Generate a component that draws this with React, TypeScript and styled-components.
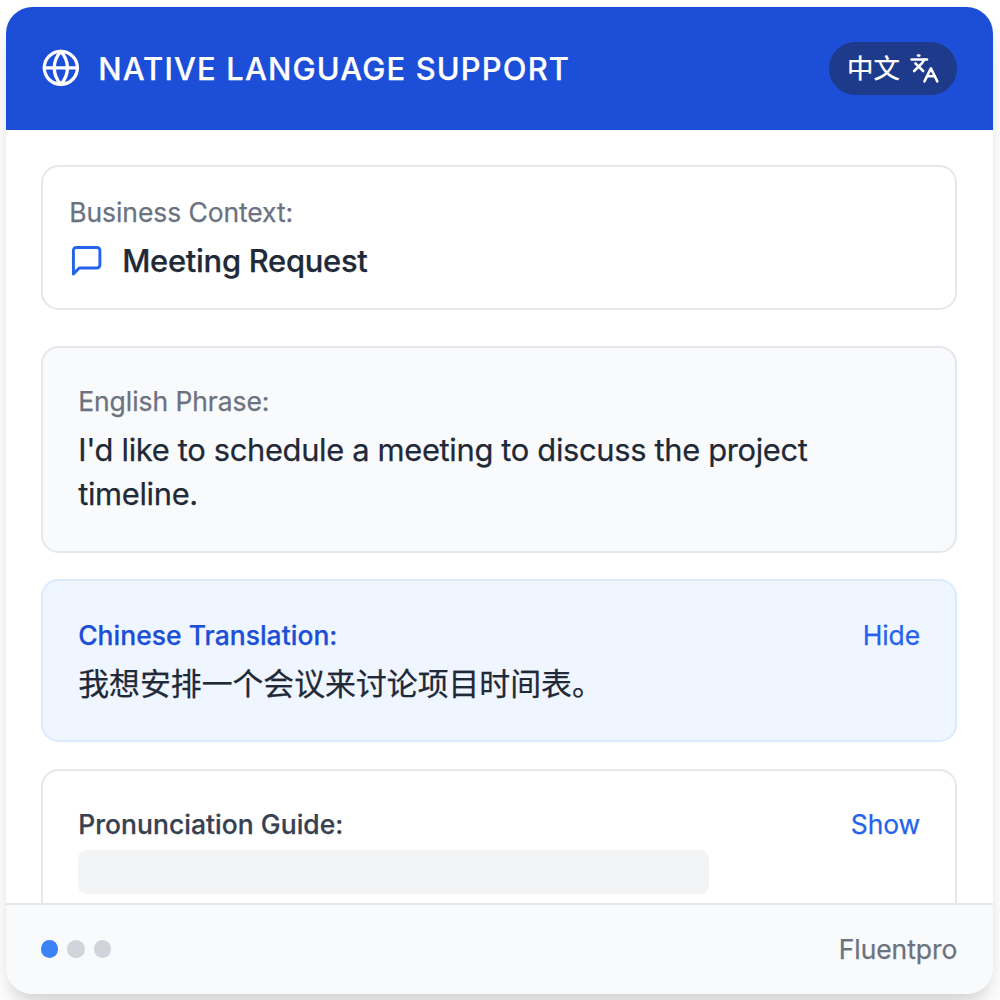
import React from "react";
import styled, { createGlobalStyle } from "styled-components";

const GlobalStyle = createGlobalStyle`
  *, *::before, *::after { box-sizing: border-box; }
  html, body { margin: 0; background: #fff; }
  body {
    width: 1000px;
    height: 1000px;
    overflow: hidden;
    font-family: Inter, "Noto Sans CJK SC", sans-serif;
    color: #1f2937;
    -webkit-font-smoothing: antialiased;
  }
`;

const Page = styled.div`
  height: 1000px;
  padding: 6.5px 7.5px 6.5px 5.6px;
  overflow: hidden;
`;

const Card = styled.div`
  display: flex;
  flex-direction: column;
  height: 987px;
  border-radius: 26.5px;
  overflow: hidden;
  background: #fff;
  box-shadow: 0 22px 33px -6.6px rgba(0, 0, 0, 0.1), 0 8.8px 13.2px -4.4px rgba(0, 0, 0, 0.1);
`;

const Header = styled.header`
  display: flex;
  flex: none;
  align-items: center;
  justify-content: space-between;
  height: 123.5px;
  padding: 0 35.3px;
  background: #1d4ed8;
  color: #fff;
`;

const Brand = styled.div`
  display: flex;
  align-items: center;
  gap: 17.6px;
`;

const Text = styled.span<{ $size?: number; $weight?: number; $color?: string; $track?: number; $line?: number }>`
  font-size: ${(p) => p.$size ?? 26.46}px;
  font-weight: ${(p) => p.$weight ?? 430};
  color: ${(p) => p.$color ?? "inherit"};
  letter-spacing: ${(p) => p.$track ?? -0.05}px;
  line-height: ${(p) => p.$line ?? 35.3}px;
  -webkit-text-stroke: 0.25px currentColor;
`;

const Badge = styled.div`
  display: flex;
  align-items: center;
  gap: 8.8px;
  height: 53px;
  padding: 0 17.6px;
  border-radius: 27px;
  background: #1e3a8a;
`;

const Content = styled.main`
  flex: 1;
  min-height: 0;
  padding: 35.3px 35.3px 0;
  overflow: hidden;
`;

const Panel = styled.section<{ $pad?: number; $bg?: string; $border?: string; $gap?: number }>`
  display: flex;
  flex-direction: column;
  gap: 8.8px;
  padding: ${(p) => (p.$pad ?? 35.3) + 0.9}px ${(p) => p.$pad ?? 35.3}px ${(p) => (p.$pad ?? 35.3) - 0.9}px;
  margin-bottom: ${(p) => p.$gap ?? 26.5}px;
  border: 2px solid ${(p) => p.$border ?? "#e5e7eb"};
  border-radius: 17.6px;
  background: ${(p) => p.$bg ?? "#fff"};
`;

const Row = styled.div`
  display: flex;
  align-items: center;
  gap: 17.6px;
`;

const SplitRow = styled(Row)`
  justify-content: space-between;
`;

const Toggle = styled.button`
  padding: 0;
  border: 0;
  background: none;
  font: 430 26.46px/35.3px Inter, sans-serif;
  color: #2563eb;
  letter-spacing: -0.15px;
  -webkit-text-stroke: 0.25px currentColor;
`;

const Placeholder = styled.div`
  width: 631px;
  height: 44px;
  margin-top: -1px;
  border-radius: 8.8px;
  background: #f3f4f6;
`;

const Footer = styled.footer`
  display: flex;
  flex: none;
  align-items: center;
  justify-content: space-between;
  height: 90.5px;
  padding: 1px 35.3px 0;
  border-top: 2px solid #e5e7eb;
  background: #f9fafb;
`;

const Dots = styled.div`
  display: flex;
  gap: 8.8px;
  margin-top: -1px;
`;

const Dot = styled.i<{ $active?: boolean }>`
  width: 17.6px;
  height: 17.6px;
  border-radius: 50%;
  background: ${(p) => (p.$active ? "#3b82f6" : "#d1d5db")};
`;

const Icon = styled.svg<{ $size: number }>`
  flex: none;
  width: ${(p) => p.$size}px;
  height: ${(p) => p.$size}px;
`;

const stroke = { fill: "none", strokeWidth: 2, strokeLinecap: "round", strokeLinejoin: "round" } as const;

export default function App() {
  return (
    <Page>
      <GlobalStyle />
      <Card>
        <Header>
          <Brand>
            <Icon $size={39.7} viewBox="0 0 24 24" stroke="#fff" {...stroke}>
              <circle cx="12" cy="12" r="10" />
              <path d="M2 12h20" />
              <path d="M12 2a15.3 15.3 0 0 1 4 10 15.3 15.3 0 0 1-4 10 15.3 15.3 0 0 1-4-10 15.3 15.3 0 0 1 4-10z" />
            </Icon>
            <Text $size={30.87} $weight={540} $track={1.19}>NATIVE LANGUAGE SUPPORT</Text>
          </Brand>
          <Badge>
            <Text $track={0}>中文</Text>
            <Icon $size={30.9} viewBox="0 0 24 24" stroke="#fff" {...stroke}>
              <path d="m5 8 6 6" />
              <path d="m4 14 6-6 2-3" />
              <path d="M2 5h12" />
              <path d="M7 2h1" />
              <path d="m22 22-5-10-5 10" />
              <path d="M14 18h6" />
            </Icon>
          </Badge>
        </Header>
        <Content>
          <Panel $pad={26.4} $gap={35.7}>
            <Text $color="#6b7280" $track={-0.07}>Business Context:</Text>
            <Row>
              <Icon $size={35.3} viewBox="0 0 24 24" stroke="#2563eb" {...stroke}>
                <path d="M21 15a2 2 0 0 1-2 2H7l-4 4V5a2 2 0 0 1 2-2h14a2 2 0 0 1 2 2z" />
              </Icon>
              <Text $size={30.87} $weight={540} $track={-0.25} $line={44.1}>Meeting Request</Text>
            </Row>
          </Panel>
          <Panel $bg="#f9fafb">
            <Text $color="#6b7280" $track={-0.05}>English Phrase:</Text>
            <Text $size={30.87} $track={-0.33} $line={44.1}>I'd like to schedule a meeting to discuss the project timeline.</Text>
          </Panel>
          <Panel $bg="#eff6ff" $border="#dbeafe">
            <SplitRow>
              <Text $weight={540} $track={0.03} $color="#1d4ed8">Chinese Translation:</Text>
              <Toggle>Hide</Toggle>
            </SplitRow>
            <Text $size={30.87} $track={0} $line={44.1}>我想安排一个会议来讨论项目时间表。</Text>
          </Panel>
          <Panel>
            <SplitRow>
              <Text $weight={540} $track={0.05} $color="#374151">Pronunciation Guide:</Text>
              <Toggle>Show</Toggle>
            </SplitRow>
            <Placeholder />
          </Panel>
        </Content>
        <Footer>
          <Dots>
            <Dot $active />
            <Dot />
            <Dot />
          </Dots>
          <Text $color="#6b7280">Fluentpro</Text>
        </Footer>
      </Card>
    </Page>
  );
}
